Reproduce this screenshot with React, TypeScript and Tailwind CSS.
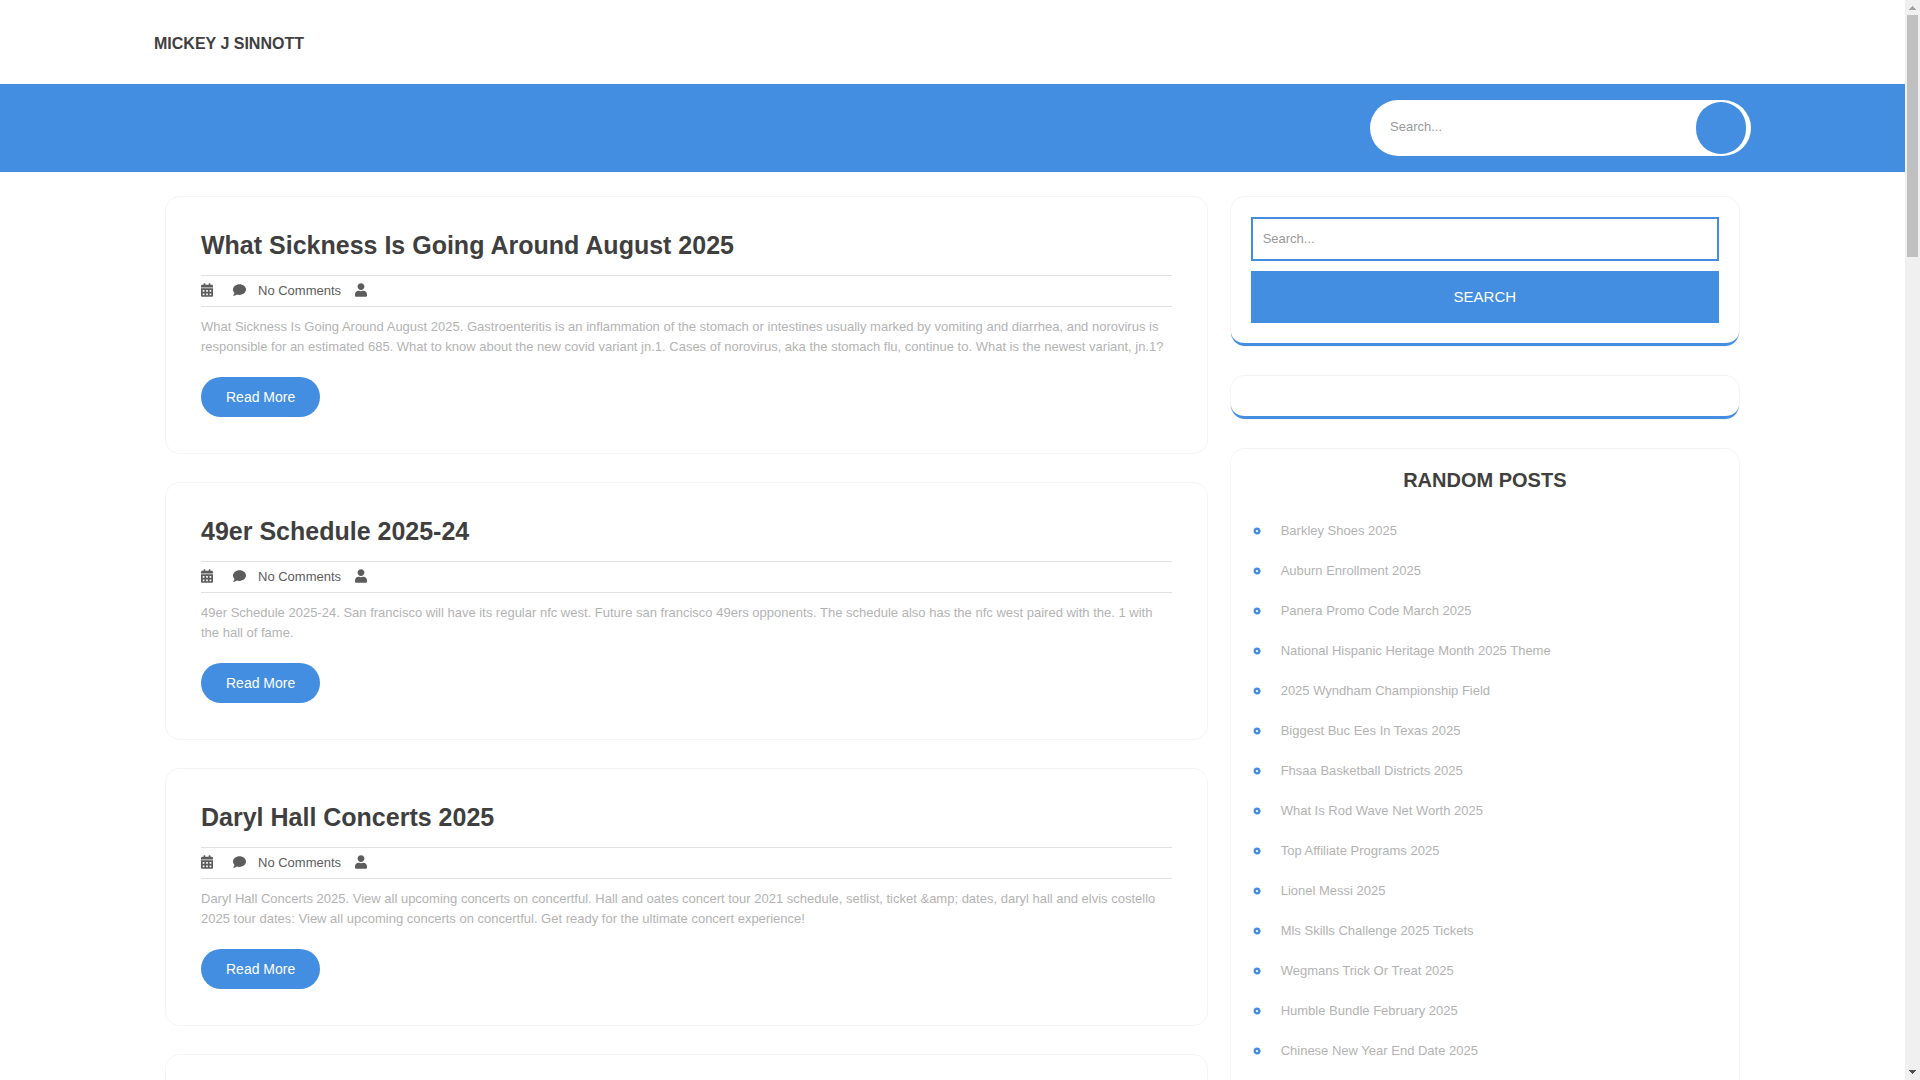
import { FaCalendarAlt, FaComment, FaUser } from 'react-icons/fa';

const posts = [
  {
    title: 'What Sickness Is Going Around August 2025',
    text: 'What Sickness Is Going Around August 2025. Gastroenteritis is an inflammation of the stomach or intestines usually marked by vomiting and diarrhea, and norovirus is responsible for an estimated 685. What to know about the new covid variant jn.1. Cases of norovirus, aka the stomach flu, continue to. What is the newest variant, jn.1?',
  },
  {
    title: '49er Schedule 2025-24',
    text: '49er Schedule 2025-24. San francisco will have its regular nfc west. Future san francisco 49ers opponents. The schedule also has the nfc west paired with the. 1 with the hall of fame.',
  },
  {
    title: 'Daryl Hall Concerts 2025',
    text: 'Daryl Hall Concerts 2025. View all upcoming concerts on concertful. Hall and oates concert tour 2021 schedule, setlist, ticket &amp; dates, daryl hall and elvis costello 2025 tour dates: View all upcoming concerts on concertful. Get ready for the ultimate concert experience!',
  },
];

const randomPosts = [
  'Barkley Shoes 2025',
  'Auburn Enrollment 2025',
  'Panera Promo Code March 2025',
  'National Hispanic Heritage Month 2025 Theme',
  '2025 Wyndham Championship Field',
  'Biggest Buc Ees In Texas 2025',
  'Fhsaa Basketball Districts 2025',
  'What Is Rod Wave Net Worth 2025',
  'Top Affiliate Programs 2025',
  'Lionel Messi 2025',
  'Mls Skills Challenge 2025 Tickets',
  'Wegmans Trick Or Treat 2025',
  'Humble Bundle February 2025',
  'Chinese New Year End Date 2025',
];

function PostCard({ title, text }: { title: string; text: string }) {
  return (
    <article className="rounded-[14px] px-[35px] pt-8 pb-9 shadow-[0_0_0_1px_#f4f4f4]">
      <h2 className="text-[25px] leading-8 font-bold">
        <a href="#">{title}</a>
      </h2>
      <div className="mt-[14px] flex h-8 items-center border-y border-[#e1e1e1] text-[13px] text-[#5c5c5c]">
        <FaCalendarAlt className="mr-5 mb-0.5 h-[14px] w-3" />
        <FaComment className="mr-3 mb-0.5 h-[14px] w-[13px]" />
        <span className="mr-[14px]">No Comments</span>
        <FaUser className="mb-0.5 h-[14px] w-3" />
      </div>
      <p className="mt-[10px] text-[13px] leading-5 text-[#b3b3b3]">{text}</p>
      <a
        href="#"
        className="mt-5 inline-flex h-10 items-center rounded-[20px] bg-[#438ee1] px-[25px] align-top text-sm text-white"
      >
        Read More
      </a>
    </article>
  );
}

function Widget({ children }: { children?: React.ReactNode }) {
  return (
    <section className="rounded-[14px] border-b-3 border-[#438ee1] p-5 shadow-[0_0_0_1px_#f4f4f4]">
      {children}
    </section>
  );
}

function Scrollbar() {
  return (
    <div className="flex w-[15px] shrink-0 flex-col items-center justify-between bg-[#f0f0f0]">
      <div className="flex flex-col items-center">
        <svg width="15" height="15" viewBox="0 0 15 15" fill="#a3a3a3" shapeRendering="crispEdges">
          <path d="M7 6h1v1h1v1h1v1h1v1H4V9h1V8h1V7h1z" />
        </svg>
        <div className="h-[242px] w-[11px] bg-[#c0c0c0]" />
      </div>
      <svg width="15" height="15" viewBox="0 0 15 15" fill="#505050" shapeRendering="crispEdges">
        <path d="M4 5h7v1h-1v1H9v1H8v1H7V8H6V7H5V6H4z" />
      </svg>
    </div>
  );
}

export default function App() {
  return (
    <div className="flex h-screen overflow-hidden bg-white font-['Liberation_Sans',Arial,sans-serif] text-[#3f3f3f]">
      <div className="min-w-0 flex-1">
        <header className="mx-auto flex h-21 max-w-[1597px] items-center pt-1">
          <a href="#" className="text-base font-bold uppercase">
            Mickey J Sinnott
          </a>
        </header>

        <div className="bg-[#438ee1] py-4">
          <div className="mx-auto flex max-w-[1597px] justify-end">
            <form className="flex h-14 w-[381px] items-center rounded-[30px] bg-white pr-[5px]">
              <input
                type="search"
                aria-label="Search"
                placeholder="Search..."
                className="h-13 min-w-0 flex-1 pb-1 pl-5 text-[13px] outline-none placeholder:text-[#999]"
              />
              <button aria-label="Submit search" className="h-13 w-[50px] rounded-[30px] bg-[#438ee1]" />
            </form>
          </div>
        </div>

        <div className="mx-auto grid max-w-[1597px] grid-cols-3 gap-6 px-3 pt-[25px]">
          <main className="col-span-2 flex flex-col gap-[30px]">
            {posts.map((post) => (
              <PostCard key={post.title} title={post.title} text={post.text} />
            ))}
            <article className="h-64 rounded-[14px] shadow-[0_0_0_1px_#f4f4f4]" />
          </main>

          <aside className="flex flex-col gap-[30px]">
            <Widget>
              <form className="flex flex-col gap-[10px]">
                <input
                  type="search"
                  aria-label="Search posts"
                  placeholder="Search..."
                  className="h-11 border-2 border-[#438ee1] px-[10px] pb-0.5 text-[13px] outline-none placeholder:text-[#999]"
                />
                <button className="h-13 bg-[#438ee1] text-[15px] text-white uppercase">Search</button>
              </form>
            </Widget>
            <Widget />
            <Widget>
              <h2 className="text-center text-xl leading-[22px] font-bold uppercase">Random Posts</h2>
              <ul className="mt-5 pb-10">
                {randomPosts.map((name) => (
                  <li key={name} className="flex h-10 items-center">
                    <svg className="mr-5 ml-0.5 size-2" viewBox="0 0 8 8" fill="none" stroke="#438ee1">
                      <circle cx="4" cy="4" r="2.3" strokeWidth="2.4" />
                    </svg>
                    <a href="#" className="text-[13px] text-[#b3b3b3]">
                      {name}
                    </a>
                  </li>
                ))}
              </ul>
            </Widget>
          </aside>
        </div>
      </div>
      <Scrollbar />
    </div>
  );
}
